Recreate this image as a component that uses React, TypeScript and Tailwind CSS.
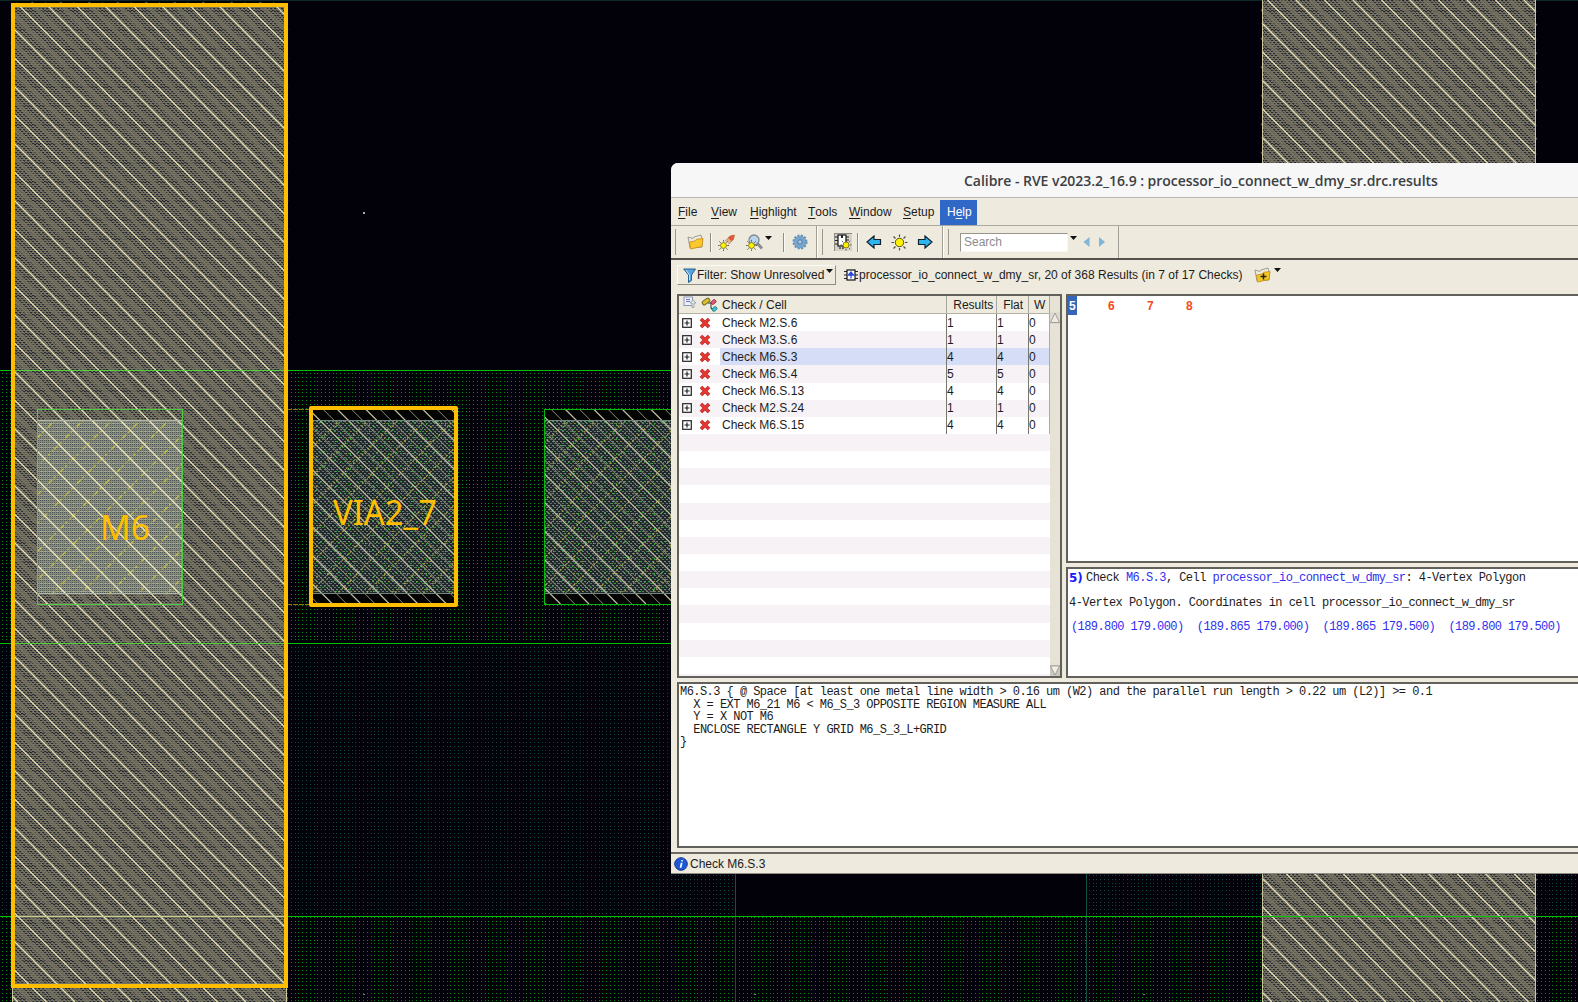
import React from "react";

const METAL_LINE = "#e4dcb2";
const PITCH = 28.5;

/* Five stipple cells fill one 19px tile, so every dot lands on a whole pixel. */
const CELLS = [0, 4, 8, 11, 15];

function Stipple({ id, color }: { id: string; color: string }) {
  return (
    <pattern id={id} width="19" height="19" patternUnits="userSpaceOnUse">
      {CELLS.map((y) => CELLS.map((x) => <rect key={x + "-" + y} x={x + 2} y={y + 1} width="1" height="1" fill={color} />))}
    </pattern>
  );
}

function Weave() {
  return (
    <pattern id="weave" width="19" height="19" patternUnits="userSpaceOnUse">
      <rect width="19" height="19" fill="#757464" />
      {CELLS.map((y) =>
        CELLS.map((x) => (
          <g key={x + "-" + y}>
            <rect x={x} y={y} width="2" height="1" fill="#282830" />
            <rect x={x + 2} y={y} width="1" height="1" fill="#5c5b52" />
            <rect x={x + 2} y={y + 2} width="2" height="1" fill="#282830" />
            <rect x={x} y={y + 2} width="1" height="1" fill="#5c5b52" />
            <rect x={x + 1} y={y + 1} width="1" height="1" fill="#50504b" />
          </g>
        )),
      )}
    </pattern>
  );
}

/* 45 degree hatch lines, x - y = -300 + k * pitch, clipped to a rectangle. */
function Hatch(p: { x: number; y: number; w: number; h: number; color: string; width: number; shift?: number; opacity?: number }) {
  const first = Math.ceil((p.x - p.y - p.h + 300 - (p.shift ?? 0)) / PITCH);
  const last = Math.floor((p.x + p.w - p.y + 300 - (p.shift ?? 0)) / PITCH);
  let d = "";
  for (let k = first; k <= last; k++) {
    const c = -300 + (p.shift ?? 0) + k * PITCH;
    const y0 = Math.max(p.y, p.x - c);
    const y1 = Math.min(p.y + p.h, p.x + p.w - c);
    d += `M${y0 + c} ${y0}L${y1 + c} ${y1}`;
  }
  return <path d={d} stroke={p.color} strokeWidth={p.width} opacity={p.opacity ?? 1} fill="none" shapeRendering="auto" />;
}

function AntiHatch(p: { x: number; y: number; w: number; h: number; pitch: number; start: number; color: string; dash: string }) {
  let d = "";
  for (let s = p.start; s < p.x + p.w + p.y + p.h; s += p.pitch) {
    const y0 = Math.max(p.y, s - p.x - p.w);
    const y1 = Math.min(p.y + p.h, s - p.x);
    if (y1 > y0) d += `M${s - y0} ${y0}L${s - y1} ${y1}`;
  }
  return <path d={d} stroke={p.color} strokeWidth="1.2" strokeDasharray={p.dash} fill="none" shapeRendering="auto" />;
}

function Metal({ x, y, w, h }: { x: number; y: number; w: number; h: number }) {
  return (
    <g>
      <rect x={x} y={y} width={w} height={h} fill="url(#weave)" />
      <Hatch x={x} y={y} w={w} h={h} color="#777362" width={4.5} shift={14.25} opacity={0.7} />
      <Hatch x={x} y={y} w={w} h={h} color={METAL_LINE} width={1.3} />
    </g>
  );
}

function Layout() {
  return (
    <svg className="block h-[1002px] w-[1578px]" viewBox="0 0 1578 1002" shapeRendering="crispEdges">
      <defs>
        <Stipple id="green" color="#008a0c" />
        <Stipple id="teal" color="#0f4743" />
        <Weave />
        <pattern id="mesh" width="4" height="4" patternUnits="userSpaceOnUse">
          <rect width="4" height="4" fill="#858a7c" />
          <rect x="0" y="0" width="1" height="1" fill="#4b5350" />
          <rect x="2" y="0" width="1" height="1" fill="#4b5350" />
          <rect x="0" y="2" width="1" height="1" fill="#59605c" />
          <rect x="2" y="2" width="1" height="1" fill="#59605c" />
          <rect x="0" y="3" width="3" height="1" fill="#a4a895" />
        </pattern>
        <pattern id="viaMesh" width="4" height="4" patternUnits="userSpaceOnUse">
          <rect width="4" height="4" fill="#1f272a" />
          <rect x="0" y="1" width="2" height="1" fill="#73827b" />
          <rect x="2" y="3" width="2" height="1" fill="#67766d" />
          <rect x="1" y="2" width="1" height="1" fill="#384c42" />
        </pattern>
        <pattern id="specks" width="19" height="15" patternUnits="userSpaceOnUse">
          <path d="M1 1h1v1h-1zM8 3h1v2h-1zM15 2h2v1h-2zM4 8h1v1h-1zM11 10h2v1h-2zM17 12h1v1h-1zM6 13h1v1h-1zM13 6h1v1h-1zM2 11h1v1h-1z" fill="#29a832" />
          <path d="M4 3h1v1h-1zM12 6h1v1h-1zM8 11h1v1h-1z" fill="#9b982f" />
        </pattern>
      </defs>
      <rect width="1578" height="1002" fill="#020109" />
      <rect y="0" width="1578" height="1" fill="#0b2927" />
      <rect y="370" width="1578" height="273" fill="url(#green)" />
      <rect y="643" width="735" height="273" fill="url(#teal)" />
      <rect x="1086" y="643" width="492" height="273" fill="url(#teal)" />
      <rect y="916" width="1578" height="86" fill="url(#green)" />

      <Metal x={12} y={3} w={275} h={999} />
      <Metal x={1262} y={0} w={274} h={1002} />
      <path d="M12.5 988V1002M286.5 988V1002M1262.5 0V1002M1535.5 0V1002" stroke="#c9c59d" />

      <path d="M735.5 873V1002M1086.5 873V1002" stroke="#0f5443" />
      <path d="M0 370.5H1578M0 643.5H1578M0 916.5H1578" stroke="#00c000" />
      <path d="M14 370.5H286M14 643.5H286" stroke="#53d23c" />
      <path d="M14 916.5H286" stroke="#c5cf91" />
      <path d="M287 409.5H310M287 604.5H310" stroke="#8a7a08" strokeDasharray="5 1" />

      <rect x="37" y="420" width="145" height="174" fill="url(#mesh)" />
      <AntiHatch x={37} y={420} w={145} h={174} pitch={28.5} start={475} color="#c9c445" dash="2 2.5 5 1.5 1 4" />
      <Hatch x={37} y={420} w={145} h={174} color="#eee8bd" width={1.3} />
      <path d="M37 420.500h145M37 593.500h145" stroke="#b3b9aa" />
      <rect x="37.5" y="409.5" width="145" height="195" fill="none" stroke="#4ccc3e" />

      {[
        { x: 311, w: 145 },
        { x: 544, w: 130 },
      ].map((v) => (
        <g key={v.x}>
          <rect x={v.x} y="409" width={v.w} height="195" fill="#020302" />
          <rect x={v.x} y="420" width={v.w} height="174" fill="url(#viaMesh)" />
          <rect x={v.x} y="420" width={v.w} height="174" fill="url(#specks)" />
          <AntiHatch x={v.x} y={420} w={v.w} h={174} pitch={28.5} start={475} color="#b3ae48" dash="1.5 2.5 2 2" />
          <Hatch x={v.x} y={409} w={v.w} h={195} color="#8f8e79" width={1} shift={14.25} />
          <Hatch x={v.x} y={409} w={v.w} h={195} color="#c0bba2" width={1.2} />
          <path d={`M${v.x} 420.5h${v.w}M${v.x} 593.5h${v.w}`} stroke="#73877f" />
        </g>
      ))}
      <rect x="544.5" y="409.5" width="140" height="195" fill="none" stroke="#09b80c" />

      <g fill="none" stroke="#ffbf00" strokeWidth="4" shapeRendering="auto">
        <rect x="13" y="5" width="273" height="981" />
        <rect x="311" y="408" width="145" height="197" strokeLinejoin="round" />
      </g>
      <g fill="#ffbf00" fontFamily="'Noto Sans', sans-serif" fontSize="34" fontWeight="400">
        <text x="100" y="540" textLength="50" lengthAdjust="spacingAndGlyphs">M6</text>
        <text x="333" y="525" textLength="104" lengthAdjust="spacingAndGlyphs">VIA2_7</text>
      </g>
      <rect x="363" y="212" width="2" height="2" fill="#aaa" />
      <rect x="363" y="994" width="2" height="1" fill="#777" />
      <rect x="754" y="994" width="2" height="1" fill="#777" />
      <rect x="1143" y="994" width="2" height="1" fill="#777" />
    </svg>
  );
}

const svgCls = "block shrink-0";

function Sun({ s, x, y }: { s: number; x: number; y: number }) {
  return (
    <g transform={`translate(${x} ${y}) scale(${s})`}>
      <path d="M0-8V-5.5M0 5.5V8M-8 0H-5.5M5.5 0H8M-6-6L-4-4M4 4L6 6M6-6L4-4M-4 4L-6 6" stroke="#54503c" strokeWidth="1.2" />
      <circle r="4.2" fill="#fff200" stroke="#5c5510" strokeWidth="1" />
    </g>
  );
}

function Folder({ plus = false }: { plus?: boolean }) {
  return (
    <svg className={svgCls} width="17" height="16" viewBox="0 0 17 16">
      <path d="M1 3L6 4.5L7 3L14 1L15.5 6L15 13L3 14Z" fill="#eceae0" stroke="#8a8a80" strokeWidth="0.8" />
      <path d="M3.5 15L2.5 8L8 7L9.500 5.300L16 4.500L15 12.500Z" fill={plus ? "#f3c81f" : "#fbc92e"} stroke="#c68a10" strokeWidth="0.8" />
      {plus && <path d="M9.500 6.500v6M6.500 9.500h6" stroke="#222" strokeWidth="1.500" />}
    </svg>
  );
}

function Caret() {
  return (
    <svg className={svgCls} width="7" height="4" viewBox="0 0 7 4">
      <path d="M0 0H7L3.500 4Z" fill="#111" />
    </svg>
  );
}

function Arrow({ flip = false }: { flip?: boolean }) {
  return (
    <svg className={svgCls} width="16" height="14" viewBox="0 0 16 14">
      <path
        d={flip ? "M14.500 4.500H8V1L1 7L8 13V9.500H14.500Z" : "M1.500 4.500H8V1L15 7L8 13V9.500H1.500Z"}
        fill="#2fb4ee"
        stroke="#10222e"
        strokeWidth="1.200"
      />
    </svg>
  );
}

function Groove() {
  return <div className="h-[19px] w-0.5 border-l border-[#8f8d85] bg-[#fbfaf5]" />;
}

function Menu({ name, at, cls }: { name: string; at: number; cls: string }) {
  return (
    <div className={"flex h-[25px] items-center whitespace-pre " + cls}>
      {name.slice(0, at)}
      <span className="underline underline-offset-2">{name[at]}</span>
      {name.slice(at + 1)}
    </div>
  );
}

function Toolbar() {
  return (
    <div className="flex h-[33px] shrink-0 items-stretch border-t border-[#aba9a0] bg-[#eeeadd]">
      <div className="flex w-[146px] items-center border-r border-[#a09e95]">
        <div className="ml-[4px] h-[26px] w-px bg-[#9a988f]" />
        <div className="ml-[11px]"><Folder /></div>
        <div className="ml-[6px]"><Groove /></div>
        <svg className={svgCls + " ml-[6px]"} width="18" height="17" viewBox="0 0 18 17">
          <path d="M5 9L12 2L16.500 1L15.500 5.500L9 12Z" fill="#d9b38a" stroke="#b57d55" strokeWidth="0.700" />
          <path d="M12 2L16.500 1L15.500 5.500L13.500 7L10 4Z" fill="#e0563a" />
          <path d="M5 9L7 7L11 10L9 12Z" fill="#eef3f6" />
          <Sun s={0.7} x={5.5} y={11.5} />
        </svg>
        <svg className={svgCls + " ml-[10px]"} width="18" height="17" viewBox="0 0 18 17">
          <path d="M11 9L16 14.500" stroke="#8c8c8c" strokeWidth="3" />
          <circle cx="8" cy="6" r="5" fill="#b9d4ec" stroke="#7f8890" strokeWidth="1.300" />
          <Sun s={0.7} x={5.5} y={11.5} />
        </svg>
        <div className="mb-2 ml-px"><Caret /></div>
        <div className="ml-[11px]"><Groove /></div>
        <svg className={svgCls + " ml-[7px]"} width="16" height="16" viewBox="-8 -8 16 16">
          <circle r="6.300" fill="#6d9cc4" stroke="#6391b8" strokeWidth="2.400" strokeDasharray="2 1.300" />
          <circle r="5.800" fill="#77a5cc" />
          <circle r="2.200" fill="#a9c8e2" stroke="#4e7ca5" strokeWidth="1" />
        </svg>
      </div>
      <div className="flex w-[126px] items-center border-r border-l border-r-[#a09e95] border-l-white">
        <div className="ml-[4px] h-[26px] w-px bg-[#9a988f]" />
        <div className="ml-[11px] flex size-[18px] items-center justify-center border-t border-l border-[#8d8b83] bg-[#d5d2c8]">
          <svg className={svgCls} width="17" height="17" viewBox="0 0 17 17">
            <path d="M0 3h3M0 6.500h3M0 10h3M11 3h3M11 6h3M5 13v2M8 13v2" stroke="#222" strokeWidth="1.200" />
            <rect x="3" y="1" width="8" height="11" fill="#fff" stroke="#222" strokeWidth="1.300" />
            <path d="M6 1v3h2V1" fill="#222" />
            <Sun s={0.7} x={11} y={11} />
          </svg>
        </div>
        <div className="ml-[5px]"><Groove /></div>
        <div className="ml-[7px]"><Arrow flip /></div>
        <svg className={svgCls + " ml-[9px]"} width="17" height="17" viewBox="-8.500 -8.500 17 17">
          <Sun s={1} x={0} y={0} />
        </svg>
        <div className="ml-[9px]"><Arrow /></div>
      </div>
      <div className="flex w-[176px] items-center border-r border-l border-r-[#a09e95] border-l-white">
        <div className="ml-[4px] h-[26px] w-px bg-[#9a988f]" />
        <div className="ml-[11px] flex h-[19px] w-[108px] items-center border border-[#97958c] border-r-[#f8f7f2] border-b-[#f8f7f2] bg-white pb-px pl-[3px] text-[#8b8b8b]">
          Search
        </div>
        <div className="mb-2 ml-[2px]"><Caret /></div>
        <svg className={svgCls + " ml-[6px]"} width="22" height="10" viewBox="0 0 22 10">
          <path d="M6.500 0V10L0.500 5Z" fill="#7fb6da" />
          <path d="M16 0V10L22 5Z" fill="#7fb6da" />
        </svg>
      </div>
    </div>
  );
}

const checks: [string, number][] = [
  ["M2.S.6", 1],
  ["M3.S.6", 1],
  ["M6.S.3", 4],
  ["M6.S.4", 5],
  ["M6.S.13", 4],
  ["M2.S.24", 1],
  ["M6.S.15", 4],
];

const panel = "border-2 border-[#62605a] bg-white";
const mono = "font-['Liberation_Mono',monospace] text-[12px] tracking-[-0.545px] whitespace-pre";

function Tree() {
  const head = "flex h-full items-center border-[#aaa89e]";
  return (
    <div className={panel + " flex h-[384px] w-[385px]"}>
      <div className="flex min-w-0 flex-1 flex-col overflow-hidden">
        <div className="flex h-[18px] shrink-0 items-center border-b border-[#b5b3a8] bg-[#eeeadd] pl-px">
          <svg className={svgCls + " ml-[3px] mb-1"} width="13" height="13" viewBox="0 0 13 13">
            <rect x="1" y="1" width="8.500" height="8.500" fill="#eef1fb" stroke="#8d97b5" />
            <path d="M3 3.500h4M3 5.500h4" stroke="#6377c4" />
            <path d="M9 11.500V7H7L10 3.500L13 7H11V11.500Z" fill="#dfe3ea" stroke="#8b93a5" strokeWidth="0.700" />
          </svg>
          <svg className={svgCls + " ml-[5px]"} width="17" height="15" viewBox="0 0 17 15">
            <path d="M7 6h4M10 6v5.500h2" stroke="#333" fill="none" />
            <rect x="-4" y="-2" width="8" height="4" rx="1.500" transform="translate(5 4.500) rotate(-38)" fill="#d8c234" stroke="#77691a" />
            <rect x="-2.500" y="-1.700" width="5" height="3.400" rx="1" transform="translate(12.500 5) rotate(-38)" fill="#e05a78" stroke="#8a2c42" strokeWidth="0.800" />
            <rect x="-2.500" y="-1.700" width="5" height="3.400" rx="1" transform="translate(13.500 12) rotate(-38)" fill="#3cc2d0" stroke="#1c7984" strokeWidth="0.800" />
          </svg>
          <div className={head + " w-[230px] border-r pl-1"}>Check / Cell</div>
          <div className={head + " w-[50px] border-r pl-[6px]"}>Results</div>
          <div className={head + " w-8 border-r pl-[6px]"}>Flat</div>
          <div className={head + " w-[21px] border-r pl-[5px]"}>W</div>
        </div>
        {Array.from({ length: 22 }, (_, i) => {
          const c = checks[i];
          return (
            <div key={i} className={"flex h-[17.15px] shrink-0 items-center " + (i % 2 ? "bg-[#f6f2f6]" : "bg-white")}>
              {c && (
                <>
                  <svg className={svgCls + " ml-[3px]"} width="10" height="10" viewBox="0 0 10 10">
                    <rect x="0.700" y="0.700" width="8.600" height="8.600" fill="#fff" stroke="#222" strokeWidth="1.200" />
                    <path d="M2.500 5h5M5 2.500v5" stroke="#222" strokeWidth="1.200" />
                  </svg>
                  <svg className={svgCls + " ml-[7px]"} width="12" height="12" viewBox="0 0 12 12">
                    <path d="M2 2L10 10M10 2L2 10" stroke="#a33434" strokeWidth="3.600" />
                    <path d="M2.200 2.200L9.800 9.800M9.800 2.200L2.200 9.800" stroke="#e8352e" strokeWidth="2.500" />
                  </svg>
                  <div className={"ml-[9px] flex h-full items-center " + (i === 2 ? "bg-[#d6ddf6]" : "")}>
                    <div className="flex h-full w-[227px] items-center border-r border-[#77766f] pl-[2px]">Check {c[0]}</div>
                    <div className="flex h-full w-[50px] items-center border-r border-[#77766f]">{c[1]}</div>
                    <div className="flex h-full w-8 items-center border-r border-[#77766f]">{c[1]}</div>
                    <div className="flex h-full w-[21px] items-center border-r border-[#aaa]">0</div>
                  </div>
                </>
              )}
            </div>
          );
        })}
      </div>
      <div className="flex w-[10px] flex-col justify-between bg-[#e6e2d5] pt-[16px]">
        <svg className={svgCls} width="10" height="12" viewBox="0 0 10 12">
          <rect width="10" height="12" fill="#dddad0" />
          <path d="M5 1L9.500 10.500H0.500Z" fill="#eeebe2" stroke="#99978e" strokeWidth="0.900" />
        </svg>
        <svg className={svgCls} width="10" height="11" viewBox="0 0 10 11">
          <rect width="10" height="11" fill="#c9c7bf" />
          <path d="M5 10L0.500 1H9.500Z" fill="#f1efe7" stroke="#99978e" strokeWidth="0.900" />
        </svg>
      </div>
    </div>
  );
}

function RveWindow() {
  return (
    <div className="absolute top-[163px] left-[671px] flex h-[711px] w-[907px] flex-col overflow-hidden rounded-tl-[7px] bg-[#eeeadd] font-['Liberation_Sans',Arial,sans-serif] text-[12px] leading-none text-[#1c1c1c]">
      <div className="flex h-[35px] shrink-0 items-center border-b border-[#b9b7b2] bg-[#f7f7f7] pt-[2px] pl-[293px] font-['Open_Sans',sans-serif] text-[14px] font-semibold tracking-[-0.04px] whitespace-nowrap text-[#3b4043]">
        Calibre - RVE v2023.2_16.9 : processor_io_connect_w_dmy_sr.drc.results
      </div>
      <div className="flex h-[27px] shrink-0 items-center pt-px pl-[7px]">
        <Menu name="File" at={0} cls="w-[33px]" />
        <Menu name="View" at={0} cls="w-[39px]" />
        <Menu name="Highlight" at={0} cls="w-[58px]" />
        <Menu name="Tools" at={0} cls="w-[41px]" />
        <Menu name="Window" at={0} cls="w-[54px]" />
        <Menu name="Setup" at={0} cls="w-[37px]" />
        <Menu name="Help" at={1} cls="w-[37px] bg-[#3068c8] pl-[7px] text-white" />
      </div>
      <Toolbar />
      <div className="flex h-[36px] shrink-0 items-center border-t-2 border-[#55524d] pl-[6px] pb-[4px]">
        <div className="flex h-5 w-[159px] items-center border border-[#fbfaf5] border-r-[#8f8d85] border-b-[#8f8d85] pl-[5px]">
          <svg className={svgCls} width="14" height="15" viewBox="0 0 14 15">
            <path d="M0.700 1H12.500L8.500 7V12.500L5.500 14.500V7Z" fill="#54a4e0" stroke="#28608f" />
            <path d="M3 2L6.500 7V12" stroke="#c4e4fa" fill="none" />
          </svg>
          <span className="whitespace-nowrap">Filter: Show Unresolved</span>
          <div className="mb-2 ml-0.5"><Caret /></div>
        </div>
        <svg className={svgCls + " ml-[8px]"} width="14" height="12" viewBox="0 0 14 12">
          <path d="M0 2.500H14M0 6H14M0 9.500H14" stroke="#222" strokeWidth="1.200" />
          <rect x="3" y="1" width="8" height="10" fill="#fff" stroke="#222" strokeWidth="1.300" />
          <path d="M7 9.500V4M4.500 6L7 3L9.500 6Z" stroke="#2748e0" fill="#2748e0" strokeWidth="1.300" />
        </svg>
        <span className="ml-px w-[395px] whitespace-nowrap tracking-[0.02px]">
          processor_io_connect_w_dmy_sr, 20 of 368 Results (in 7 of 17 Checks)
        </span>
        <Folder plus />
        <div className="mb-2.5 ml-[3px]"><Caret /></div>
      </div>
      <div className="flex h-[384px] shrink-0 gap-[4px] pl-[6px]">
        <Tree />
        <div className="flex flex-1 flex-col gap-[4px]">
          <div className={panel + " flex h-[269px] border-r-0 font-['Liberation_Sans',sans-serif] text-[12px] font-bold text-[#f5491c]"}>
            <div className="h-[19px] w-[9px] bg-[#3566bb] pt-1 pl-px text-white">5</div>
            <div className="mt-1 ml-[31px] w-[39px]">6</div>
            <div className="mt-1 w-[39px]">7</div>
            <div className="mt-1">8</div>
          </div>
          <div className={panel + " h-[111px] overflow-hidden border-r-0 pt-[2px] pl-px " + mono}>
            <div className="flex h-[14px] items-center">
              <span className="w-[17px] font-['DejaVu_Sans',sans-serif] text-[12px] font-bold tracking-normal text-[#1a1aff]">5)</span>
              <span>
                Check <span className="text-[#3030f0]">M6.S.3</span>, Cell{" "}
                <span className="text-[#3030f0]">processor_io_connect_w_dmy_sr</span>: 4-Vertex Polygon
              </span>
            </div>
            <div className="mt-[11px] flex h-[14px] items-center">4-Vertex Polygon. Coordinates in cell processor_io_connect_w_dmy_sr</div>
            <div className="mt-[10px] flex h-[14px] items-center pl-[2px] tracking-[-0.58px] text-[#3030f0]">
              (189.800 179.000)  (189.865 179.000)  (189.865 179.500)  (189.800 179.500)
            </div>
          </div>
        </div>
      </div>
      <div className="mt-[4px] shrink-0 pl-[6px]">
        <div className={panel + " h-[166px] border-r-0 pt-[2px] pl-[1px] leading-[12.5px] " + mono}>
          <div>{"M6.S.3 { @ Space [at least one metal line width > 0.16 um (W2) and the parallel run length > 0.22 um (L2)] >= 0.1"}</div>
          <div>{"  X = EXT M6_21 M6 < M6_S_3 OPPOSITE REGION MEASURE ALL"}</div>
          <div>{"  Y = X NOT M6"}</div>
          <div>{"  ENCLOSE RECTANGLE Y GRID M6_S_3_L+GRID"}</div>
          <div>{"}"}</div>
        </div>
      </div>
      <div className="mt-[4px] flex flex-1 items-center border-t-2 border-b border-t-[#6b6963] border-b-[#8f8d85] pl-[3px]">
        <svg className={svgCls} width="14" height="14" viewBox="0 0 14 14">
          <circle cx="7" cy="7" r="6.300" fill="#1e58d6" stroke="#123a94" />
          <path d="M8.200 3.200L8 4.400M7.700 5.800L6.500 10.800" stroke="#fff" strokeWidth="1.700" />
        </svg>
        <span className="ml-0.5">Check M6.S.3</span>
      </div>
    </div>
  );
}

export default function App() {
  return (
    <div className="relative h-[1002px] w-[1578px] overflow-hidden bg-black">
      <Layout />
      <RveWindow />
    </div>
  );
}
